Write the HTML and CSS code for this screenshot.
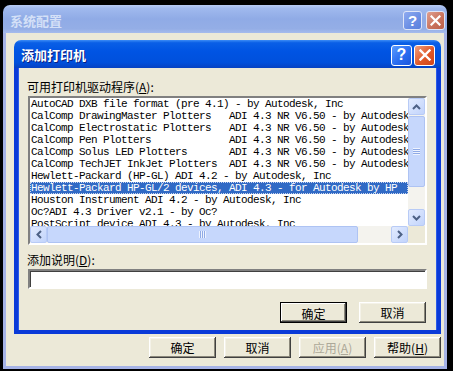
FILE: index.html
```html
<!DOCTYPE html>
<html>
<head>
    <link rel="stylesheet" href="styles.css">
</head>
<body>
<div class="win">
  <div class="win-title">
    <span class="win-caption">系统配置</span>
    <div class="cap-btns">
      <span class="cap-btn help">?</span>
      <span class="cap-btn close"><svg width="11" height="11" viewBox="0 0 11 11"><path d="M1.5 1.5 L9.5 9.5 M9.5 1.5 L1.5 9.5" stroke="#fff" stroke-width="2.2" stroke-linecap="square"/></svg></span>
    </div>
  </div>
  <div class="win-body">
    <div class="dlg">
      <div class="dlg-title">
        <span class="dlg-caption">添加打印机</span>
        <div class="cap-btns">
          <span class="cap-btn help big">?</span>
          <span class="cap-btn close big"><svg width="12" height="12" viewBox="0 0 12 12"><path d="M1.5 1.5 L10.5 10.5 M10.5 1.5 L1.5 10.5" stroke="#fff" stroke-width="2.4" stroke-linecap="square"/></svg></span>
        </div>
      </div>
      <div class="dlg-body">
        <div class="label">可用打印机驱动程序(<u>A</u>):</div>
        <div class="list">
          <div class="rows">
<div class="row">AutoCAD DXB file format (pre 4.1) - by Autodesk, Inc</div>
<div class="row">CalComp DrawingMaster Plotters   ADI 4.3 NR V6.50 - by Autodesk, Inc</div>
<div class="row">CalComp Electrostatic Plotters   ADI 4.3 NR V6.50 - by Autodesk, Inc</div>
<div class="row">CalComp Pen Plotters             ADI 4.3 NR V6.50 - by Autodesk, Inc</div>
<div class="row">CalComp Solus LED Plotters       ADI 4.3 NR V6.50 - by Autodesk, Inc</div>
<div class="row">CalComp TechJET InkJet Plotters  ADI 4.3 NR V6.50 - by Autodesk, Inc</div>
<div class="row">Hewlett-Packard (HP-GL) ADI 4.2 - by Autodesk, Inc</div>
<div class="row selected">Hewlett-Packard HP-GL/2 devices, ADI 4.3 - for Autodesk by HP</div>
<div class="row">Houston Instrument ADI 4.2 - by Autodesk, Inc</div>
<div class="row">Oc?ADI 4.3 Driver v2.1 - by Oc?</div>
<div class="row">PostScript device ADI 4.3 - by Autodesk, Inc</div>
          </div>
          <div class="vscroll">
            <span class="sb-btn"><svg width="9" height="6" viewBox="0 0 9 6"><path d="M1 5 L4.5 1.5 L8 5" fill="none" stroke="#4d6185" stroke-width="2"/></svg></span>
            <div class="sb-track v">
              <div class="thumb v"><span class="grip v"></span></div>
            </div>
            <span class="sb-btn"><svg width="9" height="6" viewBox="0 0 9 6"><path d="M1 1 L4.5 4.5 L8 1" fill="none" stroke="#4d6185" stroke-width="2"/></svg></span>
          </div>
          <div class="hscroll">
            <span class="sb-btn"><svg width="6" height="9" viewBox="0 0 6 9"><path d="M5 1 L1.5 4.5 L5 8" fill="none" stroke="#4d6185" stroke-width="2"/></svg></span>
            <div class="sb-track h">
              <div class="thumb h"><span class="grip h"></span></div>
            </div>
            <span class="sb-btn"><svg width="6" height="9" viewBox="0 0 6 9"><path d="M1 1 L4.5 4.5 L1 8" fill="none" stroke="#4d6185" stroke-width="2"/></svg></span>
          </div>
          <div class="corner"></div>
        </div>
        <div class="label second">添加说明(<u>D</u>):</div>
        <div class="field"></div>
        <div class="btn-row">
          <button class="btn default">确定</button>
          <button class="btn">取消</button>
        </div>
      </div>
    </div>
    <div class="btn-row outer-btns">
      <button class="btn">确定</button>
      <button class="btn">取消</button>
      <button class="btn disabled">应用(<u>A</u>)</button>
      <button class="btn">帮助(<u>H</u>)</button>
    </div>
  </div>
</div>
</body>
</html>
```

FILE: styles.css
```css
* {
  margin: 0;
  padding: 0;
  box-sizing: border-box;
}
body {
  width: 453px;
  height: 371px;
  background: #000;
  padding: 5px 6px 0 3px;
  font-family: "Noto Sans CJK SC", "Liberation Sans", sans-serif;
  font-size: 12px;
  overflow: hidden;
}
.win {
  width: 444px;
  height: 364px;
}
.win-title {
  height: 28px;
  border-radius: 7px 7px 0 0;
  background: linear-gradient(#b8ccf4 0%, #a0b9ee 12%, #90abe6 50%, #94aee6 85%, #a6bbec 100%);
  display: flex;
  align-items: center;
  justify-content: space-between;
  padding: 3px 2px 0 7px;
}
.win-caption {
  color: #d4e0f7;
  font-weight: bold;
  font-size: 13px;
  line-height: 16px;
}
.cap-btns {
  display: flex;
  gap: 4px;
}
.cap-btn {
  width: 19px;
  height: 19px;
  border: 1px solid #fff;
  border-radius: 3px;
  display: flex;
  align-items: center;
  justify-content: center;
  color: #fff;
  font-family: "Liberation Sans", sans-serif;
  font-weight: bold;
  font-size: 15px;
  line-height: 1;
}
.win-title .cap-btn {
  border-color: #dfe6f8;
}
.win-title .help {
  background: linear-gradient(135deg, #8eaaf0, #6a8ee4 60%, #5a80dc);
}
.win-title .close {
  background: linear-gradient(135deg, #e0a090, #c8705a 60%, #bc6048);
}
.win-body {
  height: 336px;
  background: #ece9d8;
  border: 3px solid #a6b3e6;
  border-top: 0;
  padding: 7px 3px 0 8px;
}
.dlg {
  width: 427px;
}
.dlg-title {
  height: 28px;
  border-radius: 7px 7px 0 0;
  background: linear-gradient(#3c8cf6 0%, #0a5fe6 10%, #0054e3 40%, #0050dc 80%, #0642c2 100%);
  display: flex;
  align-items: center;
  justify-content: space-between;
  padding: 2px 6px 0 7px;
}
.dlg-caption {
  color: #fff;
  font-weight: bold;
  font-size: 13px;
  line-height: 16px;
  text-shadow: 1px 1px #0a1e80;
}
.dlg-title .cap-btns {
  gap: 2px;
}
.cap-btn.big {
  width: 21px;
  height: 21px;
  font-size: 16px;
}
.dlg-title .help {
  background: linear-gradient(135deg, #5a9cff, #2a6cf0 55%, #1b55dc);
}
.dlg-title .close {
  background: linear-gradient(135deg, #f0a080, #e05828 55%, #d04418);
}
.dlg-body {
  height: 266px;
  border: 4px solid #0a3ad8;
  border-top: 0;
  box-shadow: inset 1px 0 #2a5ae8, inset -1px 0 #2a5ae8;
  padding: 13px 10px 7px 10px;
}
.label {
  height: 12px;
  line-height: 12px;
  margin-left: -1px;
  color: #000;
}
.label u {
  text-decoration: underline;
}
.list {
  margin-top: 3px;
  height: 149px;
  border: 2px solid;
  border-color: #808080 #fff #fff #808080;
  box-shadow: inset 1px 1px #404040;
  display: grid;
  grid-template-columns: 1fr 17px;
  grid-template-rows: 128px 17px;
  background: #fff;
}
.rows {
  overflow: hidden;
  background: #fff;
}
.row {
  height: 12px;
  line-height: 12px;
  font-family: "Liberation Mono", monospace;
  font-size: 11px;
  letter-spacing: -0.6px;
  white-space: pre;
  padding-left: 1px;
  color: #000;
}
.row.selected {
  background: #316ac5;
  color: #fff;
  outline: 1px dotted #c8d4ee;
  outline-offset: -1px;
}
.vscroll {
  display: flex;
  flex-direction: column;
  background: #f4f3ee;
}
.hscroll {
  display: flex;
  background: #f4f3ee;
}
.corner {
  background: #ece9d8;
}
.sb-btn {
  width: 17px;
  height: 17px;
  flex: none;
  border: 1px solid #b8cbf6;
  border-radius: 2px;
  background: linear-gradient(135deg, #e2ebfe, #c2d4fc);
  display: flex;
  align-items: center;
  justify-content: center;
}
.sb-track {
  flex: 1;
}
.thumb {
  border: 1px solid #aec3f3;
  border-radius: 2px;
  background: #c6d7fc;
  display: flex;
  align-items: center;
  justify-content: center;
}
.thumb.v {
  margin-top: 1px;
  height: 71px;
}
.thumb.h {
  width: 311px;
  height: 17px;
}
.grip.v {
  width: 7px;
  height: 7px;
  background: repeating-linear-gradient(#eef3fe 0 1px, #8faae6 1px 2px);
}
.grip.h {
  width: 7px;
  height: 7px;
  background: repeating-linear-gradient(90deg, #eef3fe 0 1px, #8faae6 1px 2px);
}
.second {
  margin-top: 9px;
}
.field {
  margin-top: 3px;
  height: 20px;
  background: #fff;
  border: 2px solid;
  border-color: #808080 #fff #fff #808080;
  box-shadow: inset 1px 1px #404040;
}
.btn-row {
  margin-top: 13px;
  display: flex;
  justify-content: flex-end;
  gap: 12px;
  padding-right: 1px;
}
.btn {
  width: 67px;
  height: 21px;
  background: #ece9d8;
  border: 0;
  box-shadow: inset -1px -1px #404040, inset 1px 1px #fff, inset -2px -2px #8a877a, inset 2px 2px #f4f2e8;
  font-family: "Noto Sans CJK SC", sans-serif;
  font-size: 12px;
  color: #000;
  line-height: 21px;
}
.btn.default {
  border: 1px solid #000;
  box-shadow: inset -1px -1px #404040, inset 1px 1px #fff, inset -2px -2px #8a877a;
}
.btn.disabled {
  color: #aca899;
}
.outer-btns {
  margin-top: 3px;
  gap: 8px;
  padding-right: 0;
}
```
